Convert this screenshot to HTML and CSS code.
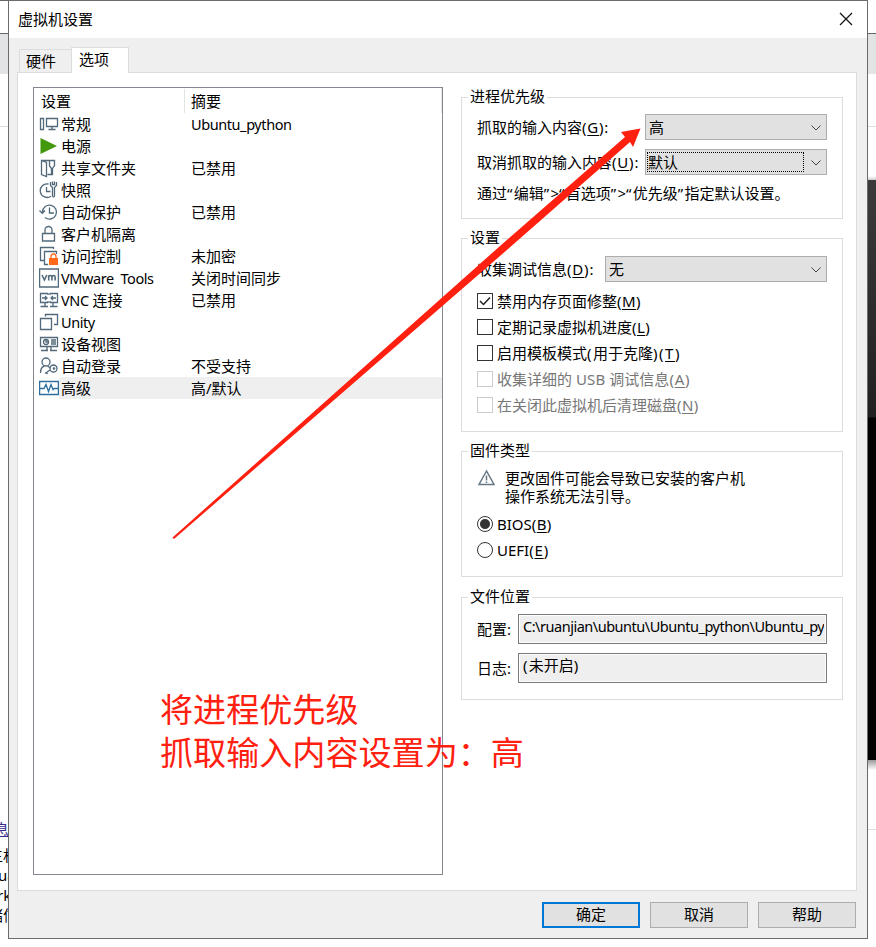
FILE: index.html
```html
<!DOCTYPE html>
<html lang="zh-CN">
<head>
<meta charset="utf-8">
<title>虚拟机设置</title>
<link rel="stylesheet" href="styles.css">
</head>
<body>
<div class="desktop">
  <div class="backdrop-left">
    <span class="bt bt-link">息</span><span class="bt">主机</span><span class="bt bt-ua">ua</span><span class="bt bt-rk">rk</span><span class="bt">储信</span>
  </div>
  <main class="dialog">
    <header class="titlebar"><span>虚拟机设置</span>
      <svg class="close" width="14" height="14" viewBox="0 0 14 14"><path d="M1 1l12 12M13 1L1 13" fill="none" stroke="#111" stroke-width="1.2"/></svg>
    </header>
    <nav class="tabs"><div class="tab">硬件</div><div class="tab active">选项</div></nav>
    <section class="panel">
      <div class="list">
        <div class="row head"><span class="name">设置</span><span class="sum">摘要</span></div>
        <div class="row"><svg class="ic" viewBox="0 0 20 20"><path d="M1.500 4.500h3v11h-3zM7.500 4.500h11v8h-11zM13 12.500v3M9.500 15.500h7"/></svg><span class="name">常规</span><span class="sum lat">Ubuntu_python</span></div>
        <div class="row"><svg class="ic" viewBox="0 0 20 20"><path class="green" d="M1.500 2l16.500 8L1.500 18z"/></svg><span class="name">电源</span></div>
        <div class="row"><svg class="ic" viewBox="0 0 20 20"><path d="M7.500 2.500h8v5l-2 3v6h-5M2.500 2.500l5 2v14l-5-2zM2.500 2.500h6M10.500 3v5l2 2.500v6"/></svg><span class="name">共享文件夹</span><span class="sum">已禁用</span></div>
        <div class="row"><svg class="ic" viewBox="0 0 20 20"><path d="M9.500 4a6.800 6.800 0 1 0 2.500 12.200M7.500 7v4.500H11.500"/><path d="M11.500 2v3.500l2 2V16q1 1.800 2 0V7.500l2-2V2M13.500 1.500v3h2v-3"/></svg><span class="name">快照</span></div>
        <div class="row"><svg class="ic" viewBox="0 0 20 20"><path d="M3.500 10a7 7 0 1 1 2.500 5.500M10.500 5.500V11H15M.5 8.500L3.300 11.300 6 8.500"/></svg><span class="name">自动保护</span><span class="sum">已禁用</span></div>
        <div class="row"><svg class="ic" viewBox="0 0 20 20"><path d="M3.500 9.500h12v7.500h-12zM6 9.500V6a3.500 3.500 0 0 1 7 0v3.500"/></svg><span class="name">客户机隔离</span></div>
        <div class="row"><svg class="ic" viewBox="0 0 20 20"><path d="M5 14.500H1.500v-13h13V3M9 18.500H5.500v-13h12V8"/><path class="orange" d="M10 12h9v7h-9z"/><path class="ostroke" d="M12 12v-1.500a2.500 2.500 0 0 1 5 0V12"/></svg><span class="name">访问控制</span><span class="sum">未加密</span></div>
        <div class="row"><svg class="ic" viewBox="0 0 20 20"><path d="M.6 1h18.800v18H.6z"/><path class="thick" d="M3 7l2.400 5L7.800 7M9.700 12.500V7.200M9.700 9q0-1.500 1.600-1.500T12.900 9v3.500M12.900 9q0-1.500 1.600-1.500T16.100 9v3.500"/></svg><span class="name lat">VMware&nbsp; Tools</span><span class="sum">关闭时间同步</span></div>
        <div class="row"><svg class="ic" viewBox="0 0 20 20"><path d="M9 3.500H1.500v9H9M11 3.500h7.500v9H11M9 3v2M11 3v2M9 11v2M11 11v2M3 8h5M17 8h-5M6 6l2 2-2 2M14 6l-2 2 2 2M6 13v3M14 13v3M1.500 16.500H9M11 16.500h7.500"/></svg><span class="name"><span class="lat">VNC</span> 连接</span><span class="sum">已禁用</span></div>
        <div class="row"><svg class="ic" viewBox="0 0 20 20"><path d="M1.500 6.500h11v11h-11zM6.500 4.500V2.500h12v10h-3.500"/></svg><span class="name lat">Unity</span></div>
        <div class="row"><svg class="ic" viewBox="0 0 20 20"><path d="M1.500 3.500h17v9h-17zM12 6h5M12 8h5M12 10h5M8 13v3M12 13v3M2 16.500h7M11 16.500h7"/><circle cx="7" cy="8" r="2.500"/><path d="M7 5v3h2"/></svg><span class="name">设备视图</span></div>
        <div class="row"><svg class="ic" viewBox="0 0 20 20"><circle cx="7" cy="6" r="4"/><path d="M1.500 17q0-6 4-7M8.500 10l3 2M6 17.500l5-3.500M7.500 16.500l1 1.500"/><circle cx="14.500" cy="12.500" r="3.500"/><circle cx="15" cy="12.500" r=".7"/></svg><span class="name">自动登录</span><span class="sum">不受支持</span></div>
        <div class="row selected"><svg class="ic" viewBox="0 0 20 20"><path class="blue" d="M.6 3.500h18.800v13H.6zM1 10.500h4l2-4 2.500 7 2.500-7 2 5 1-1h4.500"/></svg><span class="name">高级</span><span class="sum">高/默认</span></div>
      </div>
      <div class="groups">
        <fieldset class="g1"><legend>进程优先级</legend>
          <div class="field"><label>抓取的输入内容<span class="key">(<u>G</u>):</span></label><div class="select">高<svg class="chev" viewBox="0 0 10 6"><path d="M.5.5L5 5 9.500.5"/></svg></div></div>
          <div class="field"><label>取消抓取的输入内容<span class="key">(<u>U</u>):</span></label><div class="select focus"><span class="dots">默认</span><svg class="chev" viewBox="0 0 10 6"><path d="M.5.5L5 5 9.500.5"/></svg></div></div>
          <p class="hint">通过<q>“</q>编辑<q>”</q>&gt;<q>“</q>首选项<q>”</q>&gt;<q>“</q>优先级<q>”</q>指定默认设置。</p>
        </fieldset>
        <fieldset class="g2"><legend>设置</legend>
          <div class="field"><label>收集调试信息<span class="key">(<u>D</u>):</span></label><div class="select wide">无<svg class="chev" viewBox="0 0 10 6"><path d="M.5.5L5 5 9.500.5"/></svg></div></div>
          <div class="opt"><i class="box"><svg viewBox="0 0 14 14"><path d="M2 7l3.500 3.500L12 3.500"/></svg></i>禁用内存页面修整<span class="key-s">(<u>M</u>)</span></div>
          <div class="opt"><i class="box"></i>定期记录虚拟机进度<span class="key-s">(<u>L</u>)</span></div>
          <div class="opt"><i class="box"></i>启用模板模式<span class="key-w">(</span>用于克隆<span class="key-w">)(<u>T</u>)</span></div>
          <div class="opt off"><i class="box"></i>收集详细的&nbsp;<span class="usb">USB</span>&nbsp;调试信息<span class="key">(<u>A</u>)</span></div>
          <div class="opt off"><i class="box"></i>在关闭此虚拟机后清理磁盘<span class="key-s">(<u>N</u>)</span></div>
        </fieldset>
        <fieldset class="g3"><legend>固件类型</legend>
          <div class="warn"><svg width="18" height="18" viewBox="0 0 18 18"><path d="M9.500 2L2 15.500h15z" fill="none" stroke="#667785" stroke-width="1.500"/><path d="M9.500 6.500v5M9.500 12.500v1.500" stroke="#667785" stroke-width="1.500"/></svg><p>更改固件可能会导致已安装的客户机<br>操作系统无法引导。</p></div>
          <div class="opt"><i class="box radio on"></i>BIOS<span class="key-s">(<u>B</u>)</span></div>
          <div class="opt"><i class="box radio"></i>UEFI<span class="key">(<u>E</u>)</span></div>
        </fieldset>
        <fieldset class="g4"><legend>文件位置</legend>
          <div class="file"><label>配置:</label><div class="input"><span class="path">C:\ruanjian\ubuntu\Ubuntu_python\Ubuntu_py</span></div></div>
          <div class="file"><label>日志:</label><div class="input"><span><b>(</b>未开启<b>)</b></span></div></div>
        </fieldset>
      </div>
    </section>
    <footer class="buttons"><div class="btn primary">确定</div><div class="btn">取消</div><div class="btn">帮助</div></footer>
  </main>
  <div class="backdrop-right"></div>
  <svg class="arrow" width="876" height="947" viewBox="0 0 876 947"><path d="M172.500 537.500L500 246 625 137 621 132 640.500 128.500 633 147 630 142 500 256 174 539z" fill="#ff2010"/></svg>
  <div class="note">将进程优先级<br>抓取输入内容设置为：高</div>
</div>
</body>
</html>
```
FILE: styles.css
```css
* { box-sizing: border-box; }
body { margin: 0; background: #fff; color: #000; font: 15px/22px "Noto Sans", "Noto Sans CJK SC", sans-serif; overflow: hidden; }
p { margin: 0; }
u { text-decoration-thickness: 1px; text-underline-offset: 2px; }
q { quotes: none; letter-spacing: 1.3px; }
q::before, q::after { content: none; }
b { font-weight: 400; letter-spacing: 1.2px; }
.lat { font-size: 14.5px; letter-spacing: -.42px; }
.usb { letter-spacing: .2px; }
.key { letter-spacing: .8px; }
.key-s { letter-spacing: .4px; }
.key-w { letter-spacing: 1.5px; }
.desktop { position: relative; display: flex; width: 876px; height: 947px; overflow: hidden; white-space: nowrap; }
.backdrop-left, .backdrop-right { flex: none; width: 8px; height: 947px; overflow: hidden; }
.backdrop-left { padding-top: 819px; display: flex; flex-direction: column; align-items: flex-start; background: linear-gradient(#666 0 1px, #fff 1px 33px, #666 33px 34px, #e2e3e5 34px 74px, #fff 74px 126px, #ddd 126px 127px, #fff 127px); }
.bt { height: 20px; line-height: 20px; margin-left: -12px; }
.bt-link { height: 26px; margin-left: -6px; color: #3a2a90; text-decoration: underline; }
.bt-ua { margin-left: -2px; }
.bt-rk { margin-left: -3px; }
.backdrop-right { background: linear-gradient(#fff 0 33px, #666 33px 34px, #e2e3e5 34px 74px, #fff 74px 126px, #ddd 126px 127px, #fff 127px 176px, #ccc 180px, #3b3b3b 180px, #202020 417px, #000 418px 760px, #999 760px, #fff 770px 829px, #ddd 829px 830px, #fff 830px); }
.dialog { flex: none; width: 860px; height: 939px; border: 1px solid #6b6b6b; background: #efefef; }
.titlebar { height: 37px; padding: 0 14px 2px 9px; background: #fff; display: flex; align-items: center; justify-content: space-between; }
.tabs { display: flex; align-items: flex-end; height: 35px; padding-left: 10px; }
.tab { width: 52px; height: 24px; padding-left: 6px; border: 1px solid #dcdcdc; border-width: 1px 0 0 1px; line-height: 22px; }
.tab.active { position: relative; width: 58px; height: 26px; padding: 0 7px; border-width: 1px 1px 0; background: #fff; }
.panel { width: 840px; height: 819px; margin: -1px 0 0 8px; border: 1px solid #dcdcdc; background: #fff; display: flex; gap: 18px; padding: 14px 0 0 15px; }
.list { width: 410px; height: 788px; border: 1px solid #828790; }
.row { display: flex; align-items: center; height: 22px; padding-left: 5px; }
.row .name { width: 130px; margin-left: 2px; }
.row.head { height: 25px; border-right: 1px solid #e3e3e3; }
.row.head .name { width: 146px; margin: 0; padding-left: 2px; border-right: 1px solid #e3e3e3; line-height: 24px; }
.row.head .sum { padding-left: 6px; }
.row.selected { background: linear-gradient(90deg, #fff 25px, #efefef 25px); }
.ic { flex: none; width: 20px; height: 20px; fill: none; stroke: #51697a; stroke-width: 1.300; }
.ic .green { fill: #43980d; stroke: none; }
.ic .orange { fill: #ff6a1a; stroke: none; }
.ic .ostroke { stroke: #ff6a1a; }
.ic .thick { stroke-width: 1.600; }
.ic .blue { stroke: #2d6f9f; }
.groups { width: 382px; display: flex; flex-direction: column; }
fieldset { margin: 0 0 9px; padding: 0 15px; border: 1px solid #dcdcdc; min-width: 0; }
legend { height: 20px; line-height: 18px; margin-left: -9px; padding: 0 2px; }
.g1 { height: 132px; }
.g2 { height: 204px; }
.g3 { height: 136px; margin-bottom: 10px; }
.g4 { height: 113px; }
.field { display: flex; justify-content: space-between; align-items: center; margin-top: 9px; height: 26px; }
.g1 .field:nth-of-type(1) { margin-top: 7px; }
.select { position: relative; width: 182px; height: 26px; border: 1px solid #adadad; background: #e1e1e1; padding-left: 3px; line-height: 24px; }
.select.wide { width: 222px; }
.select.focus { padding: 2px 1px; }
.dots { display: block; width: 157px; height: 20px; border: 1px dotted #000; line-height: 18px; }
.chev { position: absolute; right: 5px; top: 10px; width: 10px; height: 6px; fill: none; stroke: #444; }
.hint { margin-top: 7px; }
.g2 .field { margin: 8px 0 6px; }
.opt { display: flex; align-items: center; height: 26px; }
.box { width: 16px; height: 16px; margin-right: 4px; border: 1px solid #333; background: #fff; flex: none; }
.box svg { display: block; width: 14px; height: 14px; fill: none; stroke: #222; stroke-width: 1.500; }
.off { color: #777; }
.off .box { border-color: #ccc; }
.radio { border-radius: 50%; }
.radio.on { background: radial-gradient(circle, #333 4.500px, #fff 5.500px); }
.warn { display: flex; gap: 10px; margin: 8px 0 6px; line-height: 18px; }
.file { display: flex; justify-content: space-between; align-items: center; height: 30px; margin: 7px 0 9px; }
.file + .file { margin-top: 0; }
.input { width: 309px; height: 30px; padding: 0 2px 0 4px; border: 1px solid #7a7a7a; background: #efefef; box-shadow: inset 0 0 0 1px #fff; }
.input span { display: block; overflow: hidden; line-height: 23px; }
.input .path { font-size: 14.5px; letter-spacing: -.48px; }
.buttons { display: flex; justify-content: flex-end; gap: 10px; padding: 11px 11px 0 0; }
.btn { width: 98px; height: 26px; border: 1px solid #adadad; background: #e1e1e1; text-align: center; line-height: 23px; }
.btn.primary { border: 2px solid #0078d7; line-height: 21px; }
.arrow { position: absolute; left: 0; top: 0; }
.note { position: absolute; left: 160px; top: 687px; color: #ff2010; font: 33.1px/43px "Noto Sans CJK SC", sans-serif; }
```
